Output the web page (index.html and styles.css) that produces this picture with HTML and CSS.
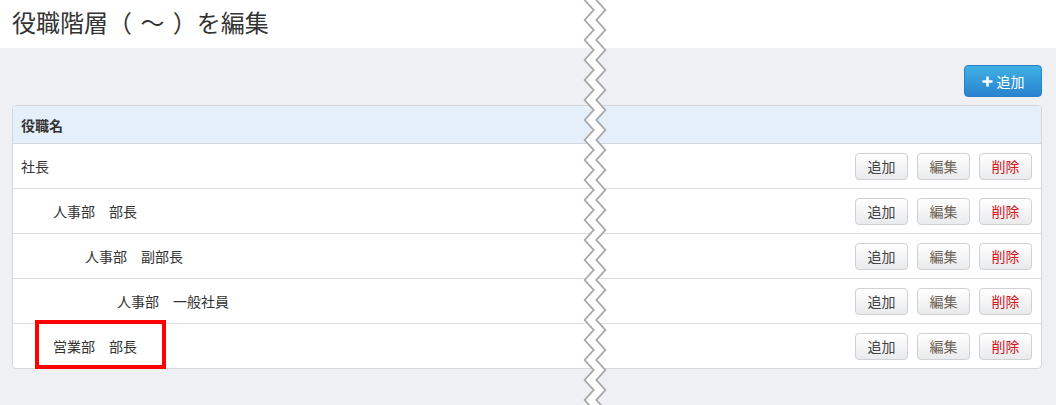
FILE: index.html
```
<!DOCTYPE html>
<html lang="ja">
<head>
<meta charset="utf-8">
<title>役職階層を編集</title>
<link rel="stylesheet" href="styles.css">
</head>
<body>
<header class="page-head">
  <h1 class="title">役職階層（ ～ ）を編集</h1>
</header>
<main class="content">
  <div class="toolbar">
    <button class="btn-primary"><svg class="plus" width="11" height="11" viewBox="0 0 11 11"><path d="M5.5 0.5V10.5M0.5 5.5H10.5" stroke="#fff" stroke-width="2.6"/></svg>追加</button>
  </div>
  <div class="panel">
    <div class="panel-head">役職名</div>
    <div class="row lvl0"><span class="name">社長</span><div class="actions"><button class="btn">追加</button><button class="btn btn-edit">編集</button><button class="btn btn-del">削除</button></div></div>
    <div class="row lvl1"><span class="name">人事部　部長</span><div class="actions"><button class="btn">追加</button><button class="btn btn-edit">編集</button><button class="btn btn-del">削除</button></div></div>
    <div class="row lvl2"><span class="name">人事部　副部長</span><div class="actions"><button class="btn">追加</button><button class="btn btn-edit">編集</button><button class="btn btn-del">削除</button></div></div>
    <div class="row lvl3"><span class="name">人事部　一般社員</span><div class="actions"><button class="btn">追加</button><button class="btn btn-edit">編集</button><button class="btn btn-del">削除</button></div></div>
    <div class="row lvl1 last"><span class="name">営業部　部長</span><div class="actions"><button class="btn">追加</button><button class="btn btn-edit">編集</button><button class="btn btn-del">削除</button></div><span class="highlight"></span></div>
  </div>
</main>
<svg class="zigzag" width="28" height="405" viewBox="0 0 28 405">
  <polyline fill="none" stroke="#a8a8a8" stroke-width="10.5" stroke-linejoin="miter" points="18.5,-10 9.5,0 18.5,10 9.5,20 18.5,30 9.5,40 18.5,50 9.5,60 18.5,70 9.5,80 18.5,90 9.5,100 18.5,110 9.5,120 18.5,130 9.5,140 18.5,150 9.5,160 18.5,170 9.5,180 18.5,190 9.5,200 18.5,210 9.5,220 18.5,230 9.5,240 18.5,250 9.5,260 18.5,270 9.5,280 18.5,290 9.5,300 18.5,310 9.5,320 18.5,330 9.5,340 18.5,350 9.5,360 18.5,370 9.5,380 18.5,390 9.5,400 18.5,410"/>
  <polyline fill="none" stroke="#ffffff" stroke-width="7" stroke-linejoin="miter" points="18.5,-10 9.5,0 18.5,10 9.5,20 18.5,30 9.5,40 18.5,50 9.5,60 18.5,70 9.5,80 18.5,90 9.5,100 18.5,110 9.5,120 18.5,130 9.5,140 18.5,150 9.5,160 18.5,170 9.5,180 18.5,190 9.5,200 18.5,210 9.5,220 18.5,230 9.5,240 18.5,250 9.5,260 18.5,270 9.5,280 18.5,290 9.5,300 18.5,310 9.5,320 18.5,330 9.5,340 18.5,350 9.5,360 18.5,370 9.5,380 18.5,390 9.5,400 18.5,410"/>
</svg>
</body>
</html>
```
FILE: styles.css
```
* { box-sizing: border-box; }
html, body { margin: 0; padding: 0; }
body {
  width: 1056px;
  height: 405px;
  overflow: hidden;
  position: relative;
  background: #eff0f4;
  font-family: "Noto Sans CJK JP", "Noto Sans", sans-serif;
  color: #333;
}
.page-head {
  height: 48px;
  background: #fff;
  padding-left: 12px;
}
.title {
  margin: 0;
  font-size: 24px;
  font-weight: normal;
  line-height: 44px;
  color: #333;
  word-spacing: 3px;
}
.content {
  padding: 17px 14px 0 12px;
}
.toolbar {
  display: flex;
  justify-content: flex-end;
  margin-bottom: 8px;
}
.btn-primary {
  width: 78px;
  height: 32px;
  padding: 0;
  border: 1px solid #2b7fc6;
  border-radius: 4px;
  background: linear-gradient(#3fb0e4, #2a83cf);
  color: #fff;
  font-family: "Noto Sans CJK JP", sans-serif;
  font-size: 14px;
  display: flex;
  align-items: center;
  justify-content: center;
  gap: 4px;
}
.plus { display: block; }
.panel {
  background: #fff;
  border: 1px solid #d3d7dc;
  border-radius: 4px;
}
.panel-head {
  height: 38px;
  background: #e5eff9;
  border-bottom: 1px solid #d3d7dc;
  border-radius: 3px 3px 0 0;
  display: flex;
  align-items: center;
  padding-left: 8px;
  font-size: 14px;
  font-weight: bold;
  color: #333;
}
.row {
  position: relative;
  height: 45px;
  border-bottom: 1px solid #dcdfe3;
  display: flex;
  align-items: center;
  justify-content: space-between;
  padding: 0 9px 0 8px;
  font-size: 14px;
}
.row.last { height: 44px; border-bottom: none; }
.lvl1 { padding-left: 40px; }
.lvl2 { padding-left: 72px; }
.lvl3 { padding-left: 104px; }
.actions {
  display: flex;
  gap: 9px;
}
.btn {
  width: 53px;
  height: 27px;
  padding: 0;
  border: 1px solid #cfd1d4;
  border-radius: 4px;
  background: linear-gradient(#ffffff, #e9eaec);
  font-family: "Noto Sans CJK JP", sans-serif;
  font-size: 14px;
  color: #444;
}
.btn-edit { color: #6e6255; }
.btn-del { color: #d8141c; }
.highlight {
  position: absolute;
  left: 22px;
  top: -4px;
  width: 131px;
  height: 49px;
  border: 4px solid #ff0000;
}
.zigzag {
  position: absolute;
  left: 581px;
  top: 0;
}
```
